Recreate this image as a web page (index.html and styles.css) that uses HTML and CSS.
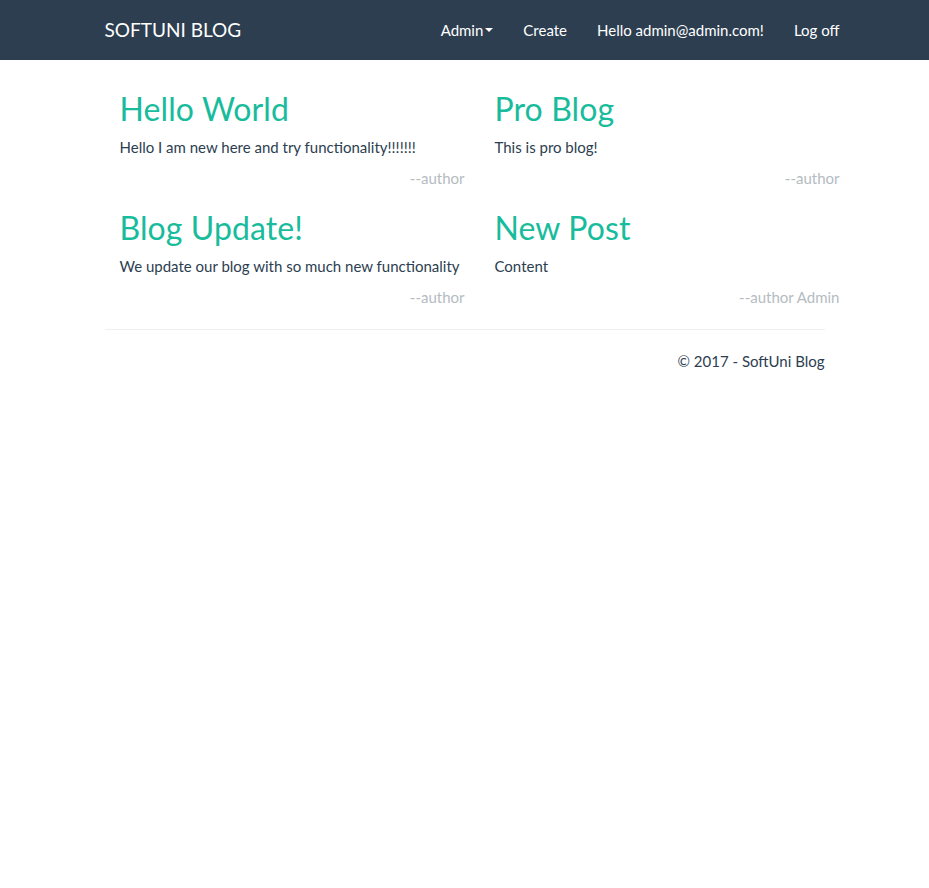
FILE: index.html
```html
<!DOCTYPE html>
<html>
<head>
<meta charset="utf-8">
<title>SoftUni Blog</title>
<link rel="stylesheet" href="styles.css">
</head>
<body>
<nav class="navbar">
  <div class="nav-inner">
    <a class="brand" href="#">SOFTUNI BLOG</a>
    <ul class="nav">
      <li><a href="#">Admin<span class="caret"></span></a></li>
      <li><a href="#">Create</a></li>
      <li><a href="#">Hello admin@admin.com!</a></li>
      <li><a href="#">Log off</a></li>
    </ul>
  </div>
</nav>
<main class="container">
  <div class="posts">
    <article class="post">
      <h2>Hello World</h2>
      <p>Hello I am new here and try functionality!!!!!!!</p>
      <small class="author">--author</small>
    </article>
    <article class="post">
      <h2>Pro Blog</h2>
      <p>This is pro blog!</p>
      <small class="author">--author</small>
    </article>
    <article class="post">
      <h2>Blog Update!</h2>
      <p>We update our blog with so much new functionality</p>
      <small class="author">--author</small>
    </article>
    <article class="post">
      <h2>New Post</h2>
      <p>Content</p>
      <small class="author">--author Admin</small>
    </article>
  </div>
  <hr class="rule">
  <footer class="footer">
    <p>© 2017 - SoftUni Blog</p>
  </footer>
</main>
</body>
</html>
```
FILE: styles.css
```css
* { box-sizing: border-box; }
html, body { margin: 0; padding: 0; }
body {
  font-family: Lato, "Open Sans", sans-serif;
  font-size: 15px;
  line-height: 1.428571;
  color: #2c3e50;
  background: #fff;
}
a { text-decoration: none; }

.navbar {
  background: #2c3e50;
  height: 60px;
}
.nav-inner {
  width: 750px;
  margin: 0 auto;
  padding: 0 0 0 15px;
  height: 60px;
  display: flex;
  align-items: center;
  justify-content: space-between;
}
.brand {
  color: #fff;
  font-size: 19px;
  line-height: 20px;
}
.nav {
  list-style: none;
  margin: 0;
  padding: 0;
  display: flex;
  gap: 30px;
}
.nav a {
  color: #fff;
  font-size: 15px;
  line-height: 20px;
  display: flex;
  align-items: center;
}
.caret {
  display: inline-block;
  width: 0;
  height: 0;
  margin-left: 2px;
  border-top: 4px solid #fff;
  border-left: 4px solid transparent;
  border-right: 4px solid transparent;
}

.container {
  width: 720px;
  margin: 0 auto;
}
.posts {
  display: grid;
  grid-template-columns: 375px 375px;
  margin: 0 -15px;
  padding-top: 31px;
}
.post {
  padding-left: 30px;
  display: flex;
  flex-direction: column;
  height: 119px;
}
.post h2 {
  color: #18bc9c;
  font-size: 32px;
  font-weight: 400;
  line-height: 1.1;
  margin: 0 0 11px;
  letter-spacing: 0.1px;
}
.post p {
  margin: 0 0 9px;
}
.author {
  color: #b4bcc2;
  font-size: 15px;
  text-align: right;
}
.rule {
  border: 0;
  border-top: 1px solid #ecf0f1;
  margin: 0 0 21px;
}
.footer {
  text-align: right;
}
.footer p { margin: 0; }
```
